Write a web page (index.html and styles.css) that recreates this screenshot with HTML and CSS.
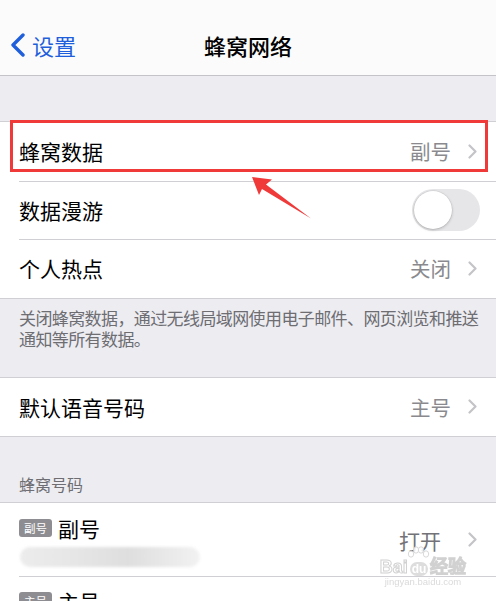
FILE: index.html
```html
<!DOCTYPE html>
<html lang="zh-CN">
<head>
<meta charset="utf-8">
<title>蜂窝网络</title>
<link rel="stylesheet" href="styles.css">
</head>
<body>
<div class="screen">
  <header class="nav">
    <div class="nav-back">
      <svg class="back-chevron" width="16" height="24" viewBox="0 0 16 24"><path d="M13 2 L3 12 L13 22" fill="none" stroke="#1f5fdc" stroke-width="3.4" stroke-linecap="round" stroke-linejoin="round"/></svg>
      <span>设置</span>
    </div>
    <div class="nav-title">蜂窝网络</div>
  </header>

  <div class="spacer-top"></div>

  <section class="group">
    <div class="row">
      <span class="label">蜂窝数据</span>
      <span class="value">副号</span>
      <svg class="chev" width="9" height="15" viewBox="0 0 9 15"><path d="M1.5 1.5 L7.5 7.5 L1.5 13.5" fill="none" stroke="#c4c4c8" stroke-width="2.2" stroke-linecap="round" stroke-linejoin="round"/></svg>
    </div>
    <div class="row">
      <span class="label">数据漫游</span>
      <span class="switch"><span class="knob"></span></span>
    </div>
    <div class="row">
      <span class="label">个人热点</span>
      <span class="value">关闭</span>
      <svg class="chev" width="9" height="15" viewBox="0 0 9 15"><path d="M1.5 1.5 L7.5 7.5 L1.5 13.5" fill="none" stroke="#c4c4c8" stroke-width="2.2" stroke-linecap="round" stroke-linejoin="round"/></svg>
    </div>
  </section>

  <p class="footnote">关闭蜂窝数据，通过无线局域网使用电子邮件、网页浏览和推送<br>通知等所有数据。</p>

  <section class="group">
    <div class="row">
      <span class="label">默认语音号码</span>
      <span class="value">主号</span>
      <svg class="chev" width="9" height="15" viewBox="0 0 9 15"><path d="M1.5 1.5 L7.5 7.5 L1.5 13.5" fill="none" stroke="#c4c4c8" stroke-width="2.2" stroke-linecap="round" stroke-linejoin="round"/></svg>
    </div>
  </section>

  <div class="section-header">蜂窝号码</div>

  <section class="group">
    <div class="row row-line">
      <div class="line-info">
        <div class="line-name"><span class="badge">副号</span><span class="label">副号</span></div>
        <div class="line-number"></div>
      </div>
      <span class="value value-dark">打开</span>
      <svg class="chev" width="9" height="15" viewBox="0 0 9 15"><path d="M1.5 1.5 L7.5 7.5 L1.5 13.5" fill="none" stroke="#c4c4c8" stroke-width="2.2" stroke-linecap="round" stroke-linejoin="round"/></svg>
    </div>
    <div class="row row-line">
      <div class="line-info">
        <div class="line-name"><span class="badge">主号</span><span class="label">主号</span></div>
        <div class="line-number"></div>
      </div>
      <span class="value value-dark">打开</span>
      <svg class="chev" width="9" height="15" viewBox="0 0 9 15"><path d="M1.5 1.5 L7.5 7.5 L1.5 13.5" fill="none" stroke="#c4c4c8" stroke-width="2.2" stroke-linecap="round" stroke-linejoin="round"/></svg>
    </div>
  </section>

  <!-- highlight frame around the first row -->
  <div class="highlight"></div>
  <svg class="pointer" width="496" height="601" viewBox="0 0 496 601">
    <polygon points="252,177 272,179.5 266,184.5 311,218.5 262,189 259,195" fill="#f03a3a"/>
  </svg>

  <div class="watermark">
    <svg class="wm-paw" width="24" height="16" viewBox="0 0 24 16">
      <g fill="#fff" stroke="#d2d2d2" stroke-width="1">
        <ellipse cx="5" cy="8" rx="2.7" ry="3.2"/>
        <ellipse cx="10" cy="4" rx="2.7" ry="3.2"/>
        <ellipse cx="15" cy="4" rx="2.7" ry="3.2"/>
        <ellipse cx="20" cy="8" rx="2.7" ry="3.2"/>
      </g>
    </svg>
    <div class="wm-logo">Bai<span class="wm-du">du</span>经验</div>
    <div class="wm-url">jingyan.baidu.com</div>
  </div>
</div>
</body>
</html>
```

FILE: styles.css
```css
* {
  box-sizing: border-box;
}

html, body {
  margin: 0;
  padding: 0;
}

body {
  background: #ececf1;
  font-family: "Noto Sans CJK SC", "Noto Sans", sans-serif;
  color: #000;
  width: 496px;
  height: 601px;
  overflow: hidden;
}

.screen {
  position: relative;
  width: 496px;
  height: 601px;
  overflow: hidden;
}

/* navigation bar */
.nav {
  position: relative;
  height: 76px;
  background: #fbfbfb;
  border-bottom: 1px solid #c4c4c8;
  display: flex;
  align-items: center;
  justify-content: center;
  padding-top: 14px;
}

.nav-back {
  position: absolute;
  left: 10px;
  top: 32px;
  display: flex;
  align-items: center;
  gap: 6px;
  color: #1f5fdc;
  font-size: 22px;
  line-height: 26px;
}

.back-chevron {
  display: block;
}

.nav-title {
  font-size: 22px;
  line-height: 26px;
  font-weight: 500;
}

.spacer-top {
  height: 45px;
}

/* grouped list */
.group {
  background: #fff;
  border-top: 1px solid #d0d0d4;
  border-bottom: 1px solid #d0d0d4;
}

.row {
  position: relative;
  display: flex;
  align-items: center;
  height: 58.5px;
  padding: 0 19px;
}

.row + .row::before {
  content: "";
  position: absolute;
  left: 19px;
  right: 0;
  top: 0;
  border-top: 1px solid #d0d0d4;
}

.label {
  font-size: 21px;
  line-height: 26px;
  flex: 1;
}

.value {
  font-size: 20.5px;
  line-height: 26px;
  color: #8a8a8e;
  margin-right: 17px;
}

.value-dark {
  font-size: 21px;
  color: #737377;
  margin-right: 27px;
}

.chev {
  display: block;
  flex: none;
}

/* toggle switch, off state */
.switch {
  position: relative;
  width: 68px;
  height: 42px;
  border-radius: 21px;
  background: #e6e6e8;
  margin-right: -3px;
}

.knob {
  position: absolute;
  left: 2px;
  top: 2px;
  width: 38px;
  height: 38px;
  border-radius: 50%;
  background: #fff;
  box-shadow: 0 1px 3px rgba(0, 0, 0, 0.22), 0 0 0 0.5px rgba(0, 0, 0, 0.08);
}

.footnote {
  margin: 0;
  padding: 8px 0 28px 19px;
  font-size: 17px;
  line-height: 21px;
  letter-spacing: -0.6px;
  color: #6d6d72;
  white-space: nowrap;
}

.section-header {
  height: 65px;
  display: flex;
  align-items: flex-end;
  padding: 0 19px 8px 19px;
  font-size: 16px;
  line-height: 20px;
  color: #6d6d72;
}

/* phone line rows */
.row-line {
  height: 73px;
}

.line-info {
  flex: 1;
  display: flex;
  flex-direction: column;
  gap: 6px;
  padding-top: 2px;
}

.line-name {
  display: flex;
  align-items: center;
  gap: 6px;
}

.line-name .label {
  flex: none;
}

.badge {
  display: inline-block;
  background: #8e8e92;
  color: #fff;
  font-size: 11.5px;
  line-height: 18px;
  height: 18px;
  width: 33px;
  text-align: center;
  border-radius: 3px;
}

.line-number {
  width: 180px;
  height: 20px;
  margin-left: 1px;
  border-radius: 10px;
  background: linear-gradient(90deg, #ececec 0%, #e6e6e6 30%, #dedede 60%, #e8e8e8 80%, #f2f2f2 100%);
  filter: blur(1.5px);
}

/* annotation overlay */
.highlight {
  position: absolute;
  left: 10px;
  top: 120px;
  width: 478px;
  height: 52px;
  border: 3px solid #f03a3a;
}

.pointer {
  position: absolute;
  left: 0;
  top: 0;
  pointer-events: none;
}

/* faint site watermark */
.watermark {
  position: absolute;
  left: 376px;
  top: 546px;
  width: 94px;
  display: flex;
  flex-direction: column;
  align-items: center;
  font-family: "Liberation Sans", sans-serif;
  opacity: 0.85;
}

.wm-paw {
  display: block;
  margin-left: -10px;
  margin-bottom: -6px;
}

.wm-logo {
  font-size: 18px;
  line-height: 22px;
  font-weight: bold;
  color: #fff;
  -webkit-text-stroke: 1px #cacaca;
  white-space: nowrap;
}

.wm-du {
  display: inline-block;
  font-size: 12px;
  line-height: 14px;
  color: #fff;
  background: #d8d8d8;
  border-radius: 7px;
  padding: 0 2px;
  margin: 0 2px;
  -webkit-text-stroke: 0;
}

.wm-url {
  font-size: 9.5px;
  line-height: 12px;
  color: #d4d4d4;
  margin-top: -2px;
  white-space: nowrap;
}
```
